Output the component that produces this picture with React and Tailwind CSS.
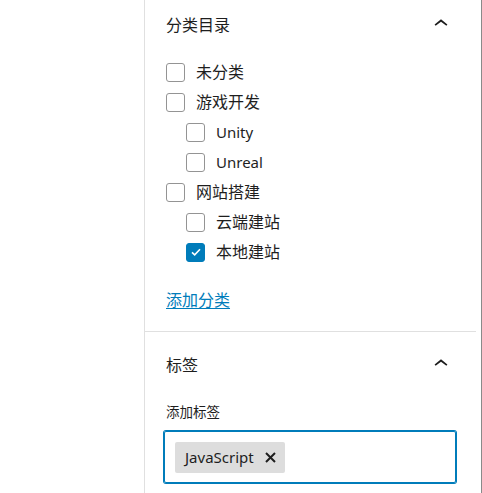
import React, { useState } from 'react';

const font = { fontFamily: '"Noto Sans", "Noto Sans CJK SC", sans-serif' };

const ChevronUp = () => (
  <svg width="28" height="28" viewBox="0 0 24 24" className="-mt-[3px] fill-[#1e1e1e]">
    <path d="M6.5 12.4L12 8l5.5 4.4-.9 1.2L12 10l-4.6 3.6-.9-1.2z" />
  </svg>
);

const Check = () => (
  <svg width="14" height="14" viewBox="0 0 14 14" fill="none">
    <path d="M3 7.3l2.7 2.6L11 4.3" stroke="white" strokeWidth="1.6" />
  </svg>
);

// 分类数据
const categories = [
  { name: '未分类', level: 0 },
  { name: '游戏开发', level: 0 },
  { name: 'Unity', level: 1, latin: true },
  { name: 'Unreal', level: 1, latin: true },
  { name: '网站搭建', level: 0 },
  { name: '云端建站', level: 1 },
  { name: '本地建站', level: 1, checked: true },
];

const CategoryRow = ({ item }) => {
  const [checked, setChecked] = useState(!!item.checked);
  return (
    <label
      className={`flex h-[30px] items-center gap-[11px] cursor-pointer ${item.level ? 'ml-[20px]' : ''}`}
      onClick={() => setChecked(!checked)}
    >
      <span
        className={`flex h-[19px] w-[19px] shrink-0 items-center justify-center rounded-[3px] border ${
          checked ? 'border-[#007cba] bg-[#007cba]' : 'border-[#949494] bg-white'
        }`}
      >
        {checked && <Check />}
      </span>
      <span className={`${item.latin ? 'text-[15px]' : 'text-[16px]'} text-[#1e1e1e]`}>{item.name}</span>
    </label>
  );
};

const App = () => {
  return (
    <div className="flex h-[493px] w-[482px] bg-white" style={font}>
      <div className="w-[144px]" />
      <div className="w-[332px] border-l border-[#e0e0e0]">
        {/* 分类目录 */}
        <div className="border-b border-[#e0e0e0] px-[21px] pb-[21px]">
          <div className="flex h-[50px] items-center justify-between">
            <h2 className="text-[16px] text-[#1e1e1e]">分类目录</h2>
            <ChevronUp />
          </div>
          <div className="pt-[7px]">
            {categories.map((c) => (
              <CategoryRow key={c.name} item={c} />
            ))}
          </div>
          <a href="#" className="mt-[23px] block text-[16px] leading-[20px] text-[#007cba] underline underline-offset-2">
            添加分类
          </a>
        </div>

        {/* 标签 */}
        <div className="px-[21px] pt-[8px]">
          <div className="flex h-[50px] items-center justify-between">
            <h2 className="text-[16px] text-[#1e1e1e]">标签</h2>
            <ChevronUp />
          </div>
          <div className="mt-[13px] text-[13.5px] leading-[18px] text-[#1e1e1e]">添加标签</div>
          <div className="mt-[10px] flex h-[52px] w-[292px] -ml-[2px] items-start rounded-[2px] border border-[#007cba] px-[10px] pt-[10px] shadow-[0_0_0_1px_#007cba]">
            <span className="flex h-[31px] items-center gap-[11px] rounded-[2px] bg-[#dddddd] pl-[10px] pr-[9px] text-[15px] text-[#1e1e1e]">
              JavaScript
              <svg width="11" height="11" viewBox="0 0 11 11">
                <path d="M1 1l9 9M10 1l-9 9" stroke="#1e1e1e" strokeWidth="2" />
              </svg>
            </span>
          </div>
        </div>
      </div>
      <div className="flex-1" />
      <div className="w-px bg-[#8a8a8a]" />
    </div>
  );
};

export default App;
